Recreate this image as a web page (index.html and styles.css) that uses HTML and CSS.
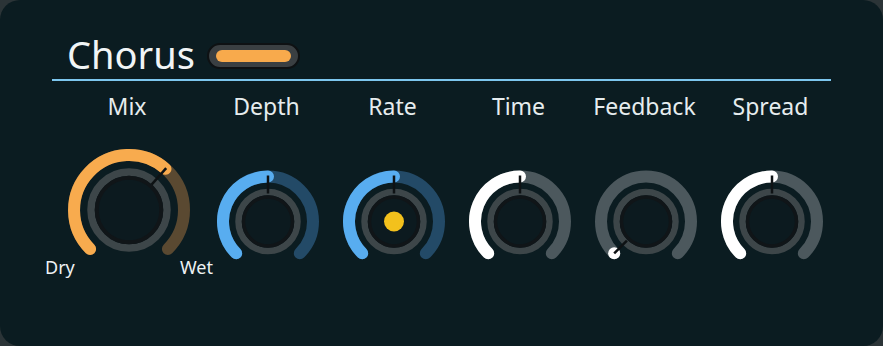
FILE: index.html
```html
<!DOCTYPE html>
<html lang="en">
<head>
    <meta charset="UTF-8">
    <title>Chorus</title>
    <link rel="stylesheet" href="styles.css">
</head>
<body>
    <div class="panel">
        <header class="panel-header">
            <h1 class="title">Chorus</h1>
            <div class="toggle"><span class="toggle-bar"></span></div>
        </header>
        <section class="knobs">
            <!-- Mix -->
            <div class="knob-col knob-col-big">
                <div class="knob-label">Mix</div>
                <svg class="knob" width="170" height="140" viewBox="0 0 170 140">
                    <path class="track-orange" d="M46.11 108.89 A55 55 0 1 1 123.89 108.89" stroke-width="13"/>
                    <path class="fill-orange" d="M46.11 108.89 A55 55 0 0 1 121.51 28.87" stroke-width="13"/>
                    <circle class="ring" cx="85" cy="70" r="38" stroke-width="7.5"/>
                    <circle class="core" cx="85" cy="70" r="32.3" stroke-width="4"/>
                    <line class="pointer" x1="122.18" y1="28.12" x2="107.57" y2="44.57"/>
                    <text class="scale-text" x="1" y="134">Dry</text>
                    <text class="scale-text" x="169" y="134" text-anchor="end">Wet</text>
                </svg>
            </div>
            <!-- Depth -->
            <div class="knob-col">
                <div class="knob-label">Depth</div>
                <svg class="knob" width="130" height="130" viewBox="0 0 130 130">
                    <path class="track-blue" d="M33.18 113.32 A45 45 0 1 1 96.82 113.32"/>
                    <path class="fill-blue" d="M33.18 113.32 A45 45 0 0 1 65 36.5"/>
                    <circle class="ring" cx="65" cy="81.5" r="29.5" stroke-width="6.5"/>
                    <circle class="core" cx="65" cy="81.5" r="24.5" stroke-width="3.5"/>
                    <line class="pointer" x1="65" y1="35.5" x2="65" y2="53.5"/>
                </svg>
            </div>
            <!-- Rate -->
            <div class="knob-col">
                <div class="knob-label">Rate</div>
                <svg class="knob" width="130" height="130" viewBox="0 0 130 130">
                    <path class="track-blue" d="M33.18 113.32 A45 45 0 1 1 96.82 113.32"/>
                    <path class="fill-blue" d="M33.18 113.32 A45 45 0 0 1 65 36.5"/>
                    <circle class="ring" cx="65" cy="81.5" r="29.5" stroke-width="6.5"/>
                    <circle class="core" cx="65" cy="81.5" r="24.5" stroke-width="3.5"/>
                    <line class="pointer" x1="65" y1="35.5" x2="65" y2="53.5"/>
                    <circle class="led" cx="65" cy="81.5" r="10"/>
                </svg>
            </div>
            <!-- Time -->
            <div class="knob-col">
                <div class="knob-label">Time</div>
                <svg class="knob" width="130" height="130" viewBox="0 0 130 130">
                    <path class="track-gray" d="M33.18 113.32 A45 45 0 1 1 96.82 113.32"/>
                    <path class="fill-white" d="M33.18 113.32 A45 45 0 0 1 65 36.5"/>
                    <circle class="ring" cx="65" cy="81.5" r="29.5" stroke-width="6.5"/>
                    <circle class="core" cx="65" cy="81.5" r="24.5" stroke-width="3.5"/>
                    <line class="pointer" x1="65" y1="35.5" x2="65" y2="53.5"/>
                </svg>
            </div>
            <!-- Feedback -->
            <div class="knob-col">
                <div class="knob-label">Feedback</div>
                <svg class="knob" width="130" height="130" viewBox="0 0 130 130">
                    <path class="track-gray" d="M33.18 113.32 A45 45 0 1 1 96.82 113.32"/>
                    <circle class="dot-white" cx="33.18" cy="113.32" r="6"/>
                    <circle class="ring" cx="65" cy="81.5" r="29.5" stroke-width="6.5"/>
                    <circle class="core" cx="65" cy="81.5" r="24.5" stroke-width="3.5"/>
                    <line class="pointer" x1="33.18" y1="113.32" x2="45.91" y2="100.59"/>
                </svg>
            </div>
            <!-- Spread -->
            <div class="knob-col">
                <div class="knob-label">Spread</div>
                <svg class="knob" width="130" height="130" viewBox="0 0 130 130">
                    <path class="track-gray" d="M33.18 113.32 A45 45 0 1 1 96.82 113.32"/>
                    <path class="fill-white" d="M33.18 113.32 A45 45 0 0 1 65 36.5"/>
                    <circle class="ring" cx="65" cy="81.5" r="29.5" stroke-width="6.5"/>
                    <circle class="core" cx="65" cy="81.5" r="24.5" stroke-width="3.5"/>
                    <line class="pointer" x1="65" y1="35.5" x2="65" y2="53.5"/>
                </svg>
            </div>
        </section>
    </div>
</body>
</html>
```

FILE: styles.css
```css
body {
    margin: 0;
    padding: 0;
    background-color: #2b3437;
    font-family: "Noto Sans", "Open Sans", sans-serif;
}

.panel {
    box-sizing: border-box;
    width: 883px;
    height: 346px;
    padding: 35px 52px 0;
    background-color: #0b1c21;
    border-radius: 20px;
}

.panel-header {
    display: flex;
    align-items: flex-start;
    width: 779px;
    padding: 0 0 6px 15px;
    box-sizing: border-box;
    border-bottom: 2px solid #7dc6ee;
}

.title {
    margin: 0;
    font-size: 38px;
    font-weight: 400;
    line-height: 38px;
    color: #f1f5f6;
}

.toggle {
    box-sizing: border-box;
    width: 93px;
    height: 26px;
    margin: 8px 0 0 12px;
    padding: 5px 7px;
    background-color: #3a3f42;
    border: 2px solid #0e1113;
    border-radius: 13px;
}

.toggle-bar {
    display: block;
    height: 12px;
    border-radius: 6px;
    background-color: #f8aa4c;
}

.knobs {
    display: flex;
    margin-top: 11px;
}

.knob-col {
    flex-shrink: 0;
    width: 126px;
    display: flex;
    flex-direction: column;
    align-items: center;
}

.knob-col-big {
    width: 153px;
}

.knob-label {
    font-size: 23px;
    line-height: 28px;
    color: #e6ecee;
    white-space: nowrap;
    margin-right: 3px;
}

.knob {
    flex-shrink: 0;
    margin-top: 20px;
    overflow: visible;
}

.knob path {
    fill: none;
    stroke-width: 12;
    stroke-linecap: round;
}

.track-orange { stroke: #5a4931; }
.fill-orange { stroke: #f8ab4e; }
.track-blue { stroke: #234a67; }
.fill-blue { stroke: #58adf0; }
.track-gray { stroke: #4c585d; }
.fill-white { stroke: #ffffff; }

.dot-white {
    fill: #ffffff;
}

.ring {
    fill: none;
    stroke: #3d4649;
}

.core {
    fill: #0c1a1f;
    stroke: #101518;
}

.pointer {
    stroke: #0e1214;
    stroke-width: 2.5;
}

.led {
    fill: #f3c11c;
}

.scale-text {
    font-family: "Noto Sans", "Open Sans", sans-serif;
    font-size: 18px;
    font-weight: 400;
    fill: #eef2f3;
}
```
